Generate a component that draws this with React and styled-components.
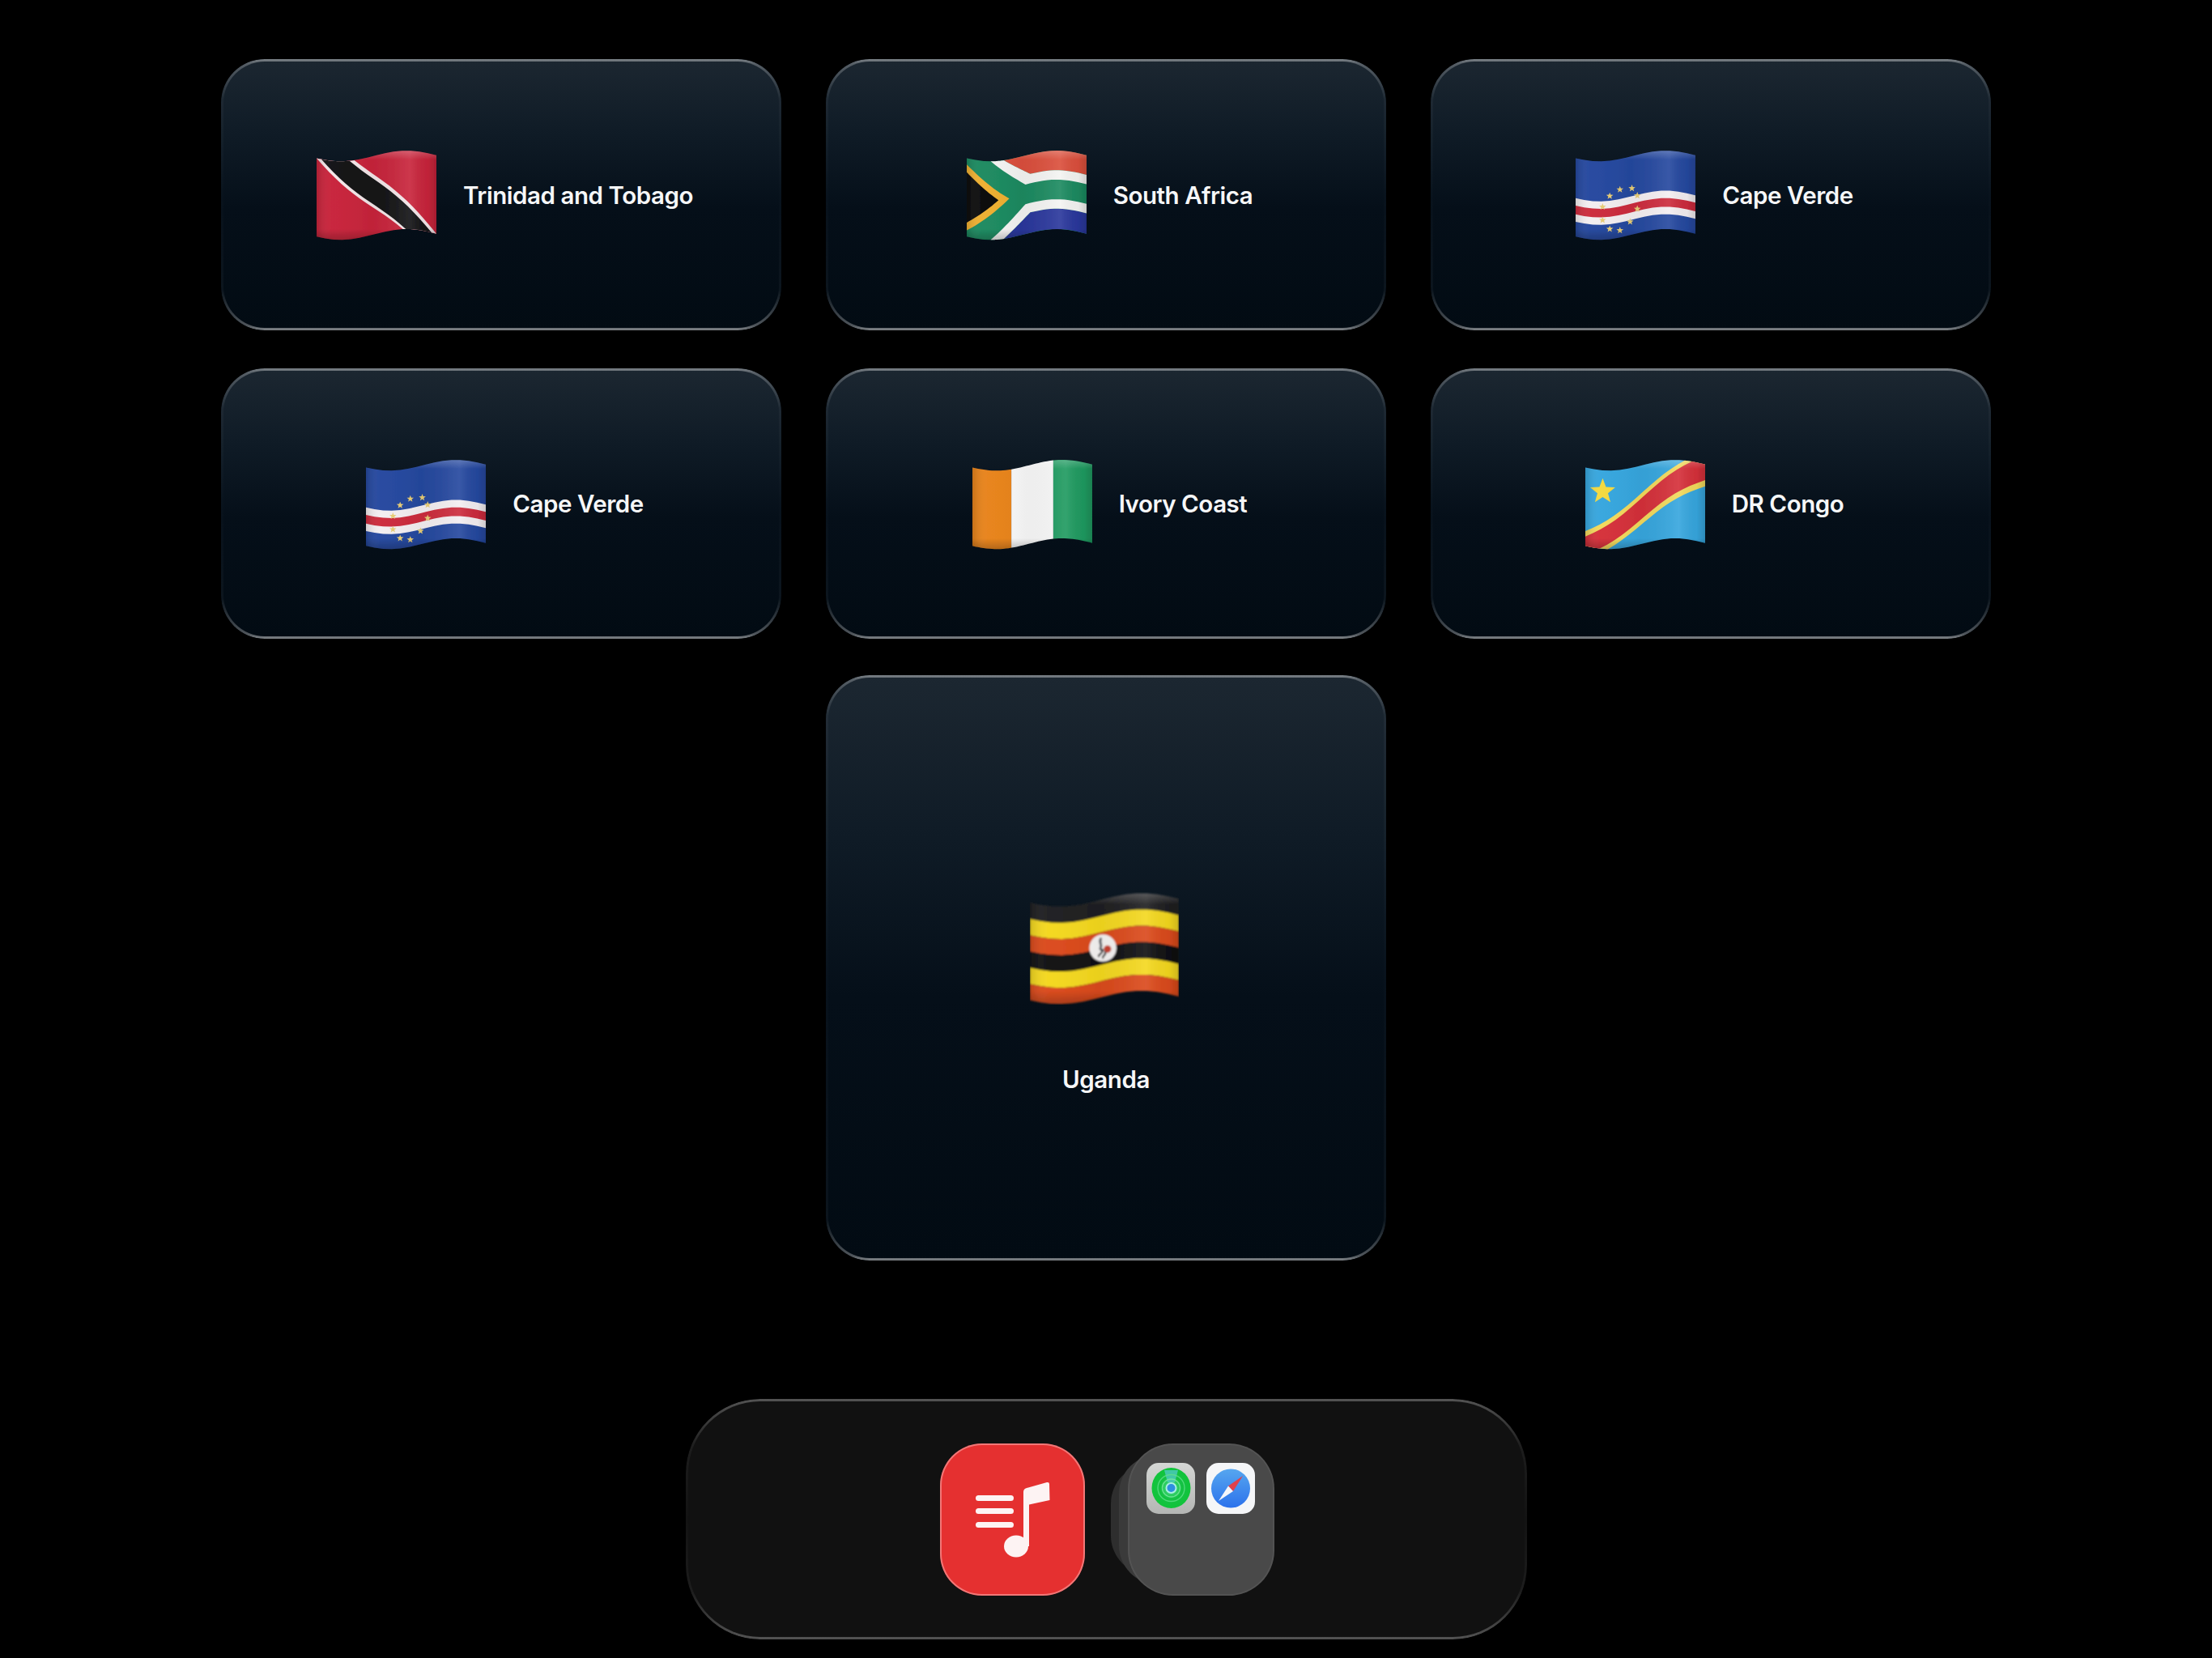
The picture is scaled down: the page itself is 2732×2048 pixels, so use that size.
import React, { useId } from "react";
import styled, { createGlobalStyle } from "styled-components";

const Global = createGlobalStyle`
  html, body { margin: 0; padding: 0; background: #000; }
  body { font-family: Inter, "Liberation Sans", sans-serif; }
`;

const Page = styled.main`
  width: 2732px;
  height: 2048px;
  box-sizing: border-box;
  padding-top: 73px;
  display: flex;
  flex-direction: column;
  align-items: center;
  background: #000;
  overflow: hidden;
`;

const Grid = styled.section`
  display: grid;
  grid-template-columns: repeat(3, 692px);
  grid-template-rows: 335px 334px 721px;
  column-gap: 55px;
  row-gap: 47px;
`;

const Card = styled.article`
  position: relative;
  box-sizing: border-box;
  display: flex;
  flex-direction: ${(p) => (p.$tall ? "column" : "row")};
  grid-column: ${(p) => (p.$tall ? "2" : "auto")};
  margin-top: ${(p) => (p.$tall ? "-2px" : "0")};
  align-items: center;
  justify-content: center;
  gap: ${(p) => (p.$tall ? "74px" : "33px")};
  padding: ${(p) => (p.$tall ? "62px 0 0" : "0 0 0 9px")};
  border-radius: 54px;
  background: linear-gradient(180deg, #1c2731 0%, #0f1b26 28%, #050f19 55%, #020b13 100%);

  &::after {
    content: "";
    position: absolute;
    inset: 0;
    padding: 3px;
    border-radius: inherit;
    background: linear-gradient(
      180deg,
      rgba(255, 255, 255, 0.42) 0,
      rgba(255, 255, 255, 0.26) 6px,
      rgba(255, 255, 255, 0.04) 50px,
      rgba(255, 255, 255, 0.01) 50%,
      rgba(255, 255, 255, 0.04) calc(100% - 50px),
      rgba(255, 255, 255, 0.3) calc(100% - 6px),
      rgba(255, 255, 255, 0.5) 100%
    );
    mask: linear-gradient(#000 0 0) content-box exclude, linear-gradient(#000 0 0);
    pointer-events: none;
  }
`;

const Name = styled.span`
  font-size: 29.5px;
  font-weight: 600;
  line-height: 36px;
  letter-spacing: -0.45px;
  color: #f6f7f8;
`;

const FlagSvg = styled.svg`
  display: block;
  flex: none;
  width: ${(p) => p.$size}px;
  height: ${(p) => p.$size * (110 / 145)}px;
  margin: ${(p) => (p.$large ? "0 5px 0 0" : "2px 0 0 0")};
`;

const Dock = styled.nav`
  position: relative;
  isolation: isolate;
  box-sizing: border-box;
  width: 1039px;
  height: 297px;
  margin-top: 171px;
  padding-left: 2px;
  border-radius: 92px;
  background: #111;
  display: flex;
  align-items: center;
  justify-content: center;
  gap: 53px;

  &::after {
    content: "";
    position: absolute;
    inset: 0;
    padding: 3px;
    border-radius: inherit;
    background: linear-gradient(
      180deg,
      rgba(255, 255, 255, 0.28) 0,
      rgba(255, 255, 255, 0.05) 60px,
      rgba(255, 255, 255, 0.01) 50%,
      rgba(255, 255, 255, 0.05) calc(100% - 60px),
      rgba(255, 255, 255, 0.28) 100%
    );
    mask: linear-gradient(#000 0 0) content-box exclude, linear-gradient(#000 0 0);
    pointer-events: none;
  }
`;

const AppTile = styled.div`
  width: 179px;
  height: 188px;
  box-sizing: border-box;
  border-radius: 52px;
  background: #e53030;
  box-shadow: inset 0 0 0 2px rgba(255, 190, 190, 0.5);
  svg { display: block; width: 100%; height: 100%; }
`;

const Folder = styled.div`
  position: relative;
  width: 181px;
  height: 188px;
  box-sizing: border-box;
  padding: 24px 23px;
  border-radius: 56px;
  background: #494949;
  box-shadow: inset 0 0 0 2px rgba(255, 255, 255, 0.06);
  display: grid;
  grid-template-columns: 60px 60px;
  grid-auto-rows: 63px;
  column-gap: 14px;
`;

const FolderLayer = styled.div`
  position: absolute;
  z-index: ${(p) => p.$z};
  left: ${(p) => p.$left}px;
  top: ${(p) => p.$inset}px;
  bottom: ${(p) => p.$inset}px;
  width: 120px;
  border-radius: 48px;
  background: ${(p) => p.$color};
`;

const MiniIcon = styled.div`
  border-radius: 15px;
  overflow: hidden;
  svg { display: block; width: 100%; height: 100%; }
`;

const W = 145;
const H = 95;
const wave = (u) => 6.5 + 6.5 * Math.cos((2 * Math.PI * (u - 0.2)) / 1.1);
const warp = (u, v) => [u * W, H * v + wave(u) + 1];

function path(points) {
  let d = "";
  points.forEach((pt, i) => {
    const next = points[(i + 1) % points.length];
    for (let s = 0; s < 14; s++) {
      const t = s / 14;
      const [x, y] = warp(pt[0] + (next[0] - pt[0]) * t, pt[1] + (next[1] - pt[1]) * t);
      d += `${d ? "L" : "M"}${x.toFixed(2)} ${y.toFixed(2)}`;
    }
  });
  return d + "Z";
}

const band = (a, b) => [[0, a], [1, a], [1, b], [0, b]];
const column = (a, b) => [[a, 0], [b, 0], [b, 1], [a, 1]];

function starAt(u, v, r) {
  const [cx, cy] = warp(u, v);
  let d = "";
  for (let i = 0; i < 10; i++) {
    const a = -Math.PI / 2 + (i * Math.PI) / 5;
    const rad = i % 2 ? r * 0.42 : r;
    d += `${i ? "L" : "M"}${(cx + rad * Math.cos(a)).toFixed(2)} ${(cy + rad * Math.sin(a)).toFixed(2)}`;
  }
  return d + "Z";
}

const S = (points, fill) => ({ d: path(points), fill });

const cvStars = [
  [0.37, 0.39], [0.47, 0.41], [0.515, 0.52], [0.515, 0.69], [0.455, 0.83],
  [0.37, 0.91], [0.285, 0.87], [0.225, 0.75], [0.225, 0.58], [0.285, 0.45],
];

const FLAGS = {
  tt: [
    S(band(0, 1), "#c8243b"),
    S([[0, 0], [0.315, 0], [1, 1], [0.72, 1]], "#f3e6e8"),
    S([[0.04, 0], [0.275, 0], [0.96, 1], [0.745, 1]], "#131315"),
  ],
  za: [
    S(band(0, 1), "#1c8a60"),
    S([[0.31, 0], [1, 0], [1, 0.25], [0.53, 0.25]], "#db4f3c"),
    S([[0.2, 0], [0.31, 0], [0.53, 0.25], [1, 0.25], [1, 0.37], [0.49, 0.37]], "#f4f4f2"),
    S([[0.31, 1], [1, 1], [1, 0.74], [0.53, 0.74]], "#2a379c"),
    S([[0.2, 1], [0.31, 1], [0.53, 0.74], [1, 0.74], [1, 0.62], [0.49, 0.62]], "#f4f4f2"),
    S([[0, 0.08], [0.355, 0.5], [0, 0.92]], "#eeaf30"),
    S([[0, 0.18], [0.265, 0.5], [0, 0.82]], "#0b0b0c"),
  ],
  cv: [
    S(band(0, 1), "#25489f"),
    S(band(0.51, 0.81), "#f3eef1"),
    S(band(0.605, 0.715), "#cc2b3d"),
    ...cvStars.map(([u, v]) => ({ d: starAt(u, v, 4.4), fill: "#e8cd75" })),
  ],
  ci: [
    S(column(0, 0.325), "#e8831b"),
    S(column(0.325, 0.675), "#f8f8f8"),
    S(column(0.675, 1), "#1f9a60"),
  ],
  cd: [
    S(band(0, 1), "#36a6de"),
    S([[0, 0.81], [0.83, 0], [1, 0], [1, 0.28], [0.19, 1], [0, 1]], "#f2d95c"),
    S([[0, 0.88], [0.89, 0], [1, 0], [1, 0.2], [0.12, 1], [0, 1]], "#d5303a"),
    { d: starAt(0.145, 0.27, 16), fill: "#f3d93f" },
  ],
  ug: [
    S(band(0, 1 / 6), "#1f1f21"),
    S(band(1 / 6, 2 / 6), "#f4d81f"),
    S(band(2 / 6, 3 / 6), "#db4a1c"),
    S(band(3 / 6, 4 / 6), "#111113"),
    S(band(4 / 6, 5 / 6), "#f4d81f"),
    S(band(5 / 6, 1), "#db4a1c"),
  ],
};

function Crane() {
  const [cx, cy] = warp(0.49, 0.5);
  return (
    <g transform={`translate(${cx} ${cy})`}>
      <circle r="13.2" fill="#f5f3f2" />
      <path d="M-2 -9 C-4 -6 -1 -4 -2 -1 C-3 1 -2 2 0 2" fill="none" stroke="#5a5f66" strokeWidth="2.4" strokeLinecap="round" />
      <circle cx="4.5" cy="1" r="3.6" fill="#c8402f" />
      <path d="M-1 2 C1 5 -5 6 -4 8 M2 4 C4 7 -1 7 0 9.5" fill="none" stroke="#1d1d1f" strokeWidth="1.7" strokeLinecap="round" />
    </g>
  );
}

function Flag({ code, size = 148, large = false }) {
  const id = useId().replace(/[^a-zA-Z0-9]/g, "");
  const outline = path(band(0, 1));
  return (
    <FlagSvg $size={size} $large={large} viewBox="0 0 145 110" role="img" aria-label={code}>
      <defs>
        <linearGradient id={`${id}s`} x1="0" x2="1" y1="0" y2="0">
          <stop offset="0" stopColor="#000" stopOpacity="0.14" />
          <stop offset="0.12" stopColor="#fff" stopOpacity="0.02" />
          <stop offset="0.45" stopColor="#000" stopOpacity="0.04" />
          <stop offset="0.78" stopColor="#fff" stopOpacity="0.09" />
          <stop offset="0.93" stopColor="#000" stopOpacity="0.04" />
          <stop offset="1" stopColor="#000" stopOpacity="0.16" />
        </linearGradient>
        <linearGradient id={`${id}v`} x1="0" x2="0" y1="0" y2="1">
          <stop offset="0" stopColor="#fff" stopOpacity="0.2" />
          <stop offset="0.1" stopColor="#fff" stopOpacity="0" />
          <stop offset="0.88" stopColor="#000" stopOpacity="0" />
          <stop offset="1" stopColor="#000" stopOpacity="0.22" />
        </linearGradient>
        <filter id={`${id}b`} x="-5%" y="-5%" width="110%" height="110%">
          <feGaussianBlur stdDeviation="0.7" />
        </filter>
      </defs>
      <g filter={`url(#${id}b)`}>
        {FLAGS[code].map((shape, i) => (
          <path key={i} d={shape.d} fill={shape.fill} />
        ))}
        {code === "ug" && <Crane />}
        <path d={outline} fill={`url(#${id}s)`} />
        <path d={outline} fill={`url(#${id}v)`} />
      </g>
    </FlagSvg>
  );
}

function MusicGlyph() {
  return (
    <svg viewBox="0 0 179 188">
      <g fill="#fdf3f3">
        <rect x="44" y="64" width="47" height="7" rx="3.5" />
        <rect x="44" y="80" width="47" height="7" rx="3.5" />
        <rect x="44" y="97" width="47" height="7" rx="3.5" />
        <path d="M103 60 Q103 56 107 55 L132 48 Q135 47.5 135 50 L135.5 70 L110 75.5 L110 127 L103 127 Z" />
        <ellipse cx="94" cy="127" rx="15" ry="13.5" />
      </g>
    </svg>
  );
}

function FindMyGlyph() {
  return (
    <svg viewBox="0 0 60 63">
      <defs>
        <linearGradient id="fmbg" x1="0" x2="0" y1="0" y2="1">
          <stop offset="0" stopColor="#d4d6d4" />
          <stop offset="1" stopColor="#b4b6b4" />
        </linearGradient>
        <radialGradient id="fmdisc">
          <stop offset="0.3" stopColor="#34d06a" />
          <stop offset="0.55" stopColor="#14c243" />
          <stop offset="1" stopColor="#10c43a" />
        </radialGradient>
      </defs>
      <rect width="60" height="63" fill="url(#fmbg)" />
      <ellipse cx="30.5" cy="31" rx="24" ry="25" fill="url(#fmdisc)" />
      <path d="M22 9 L39 9 L35 24 L26 24 Z" fill="#4ec9c0" opacity="0.8" />
      <circle cx="30.5" cy="31" r="16.5" fill="none" stroke="#5fe08a" strokeWidth="1.4" opacity="0.8" />
      <circle cx="30.5" cy="31" r="11" fill="none" stroke="#7ae8a0" strokeWidth="1.4" opacity="0.8" />
      <circle cx="30.5" cy="31" r="6" fill="#2f8fe0" stroke="#a8f0e0" strokeWidth="2" />
    </svg>
  );
}

function SafariGlyph() {
  return (
    <svg viewBox="0 0 60 63">
      <defs>
        <linearGradient id="sfdisc" x1="0" x2="0" y1="0" y2="1">
          <stop offset="0" stopColor="#56a6ef" />
          <stop offset="1" stopColor="#2c72ec" />
        </linearGradient>
      </defs>
      <rect width="60" height="63" fill="#f5f6f8" />
      <circle cx="30" cy="31.5" r="24" fill="url(#sfdisc)" />
      <path d="M45 16 L27 28.5 L33 35 Z" fill="#e0414c" />
      <path d="M15 47 L33 35 L27 28.5 Z" fill="#f4f6fa" />
    </svg>
  );
}

const countries = [
  { code: "tt", name: "Trinidad and Tobago" },
  { code: "za", name: "South Africa" },
  { code: "cv", name: "Cape Verde" },
  { code: "cv", name: "Cape Verde" },
  { code: "ci", name: "Ivory Coast" },
  { code: "cd", name: "DR Congo" },
];

export default function App() {
  return (
    <Page>
      <Global />
      <Grid>
        {countries.map((c, i) => (
          <Card key={i}>
            <Flag code={c.code} />
            <Name>{c.name}</Name>
          </Card>
        ))}
        <Card $tall>
          <Flag code="ug" size={184} large />
          <Name>Uganda</Name>
        </Card>
      </Grid>
      <Dock>
        <AppTile>
          <MusicGlyph />
        </AppTile>
        <Folder>
          <FolderLayer $z={-2} $left={-21} $inset={26} $color="#2e2e2e" />
          <FolderLayer $z={-1} $left={-11} $inset={14} $color="#3a3a3a" />
          <MiniIcon>
            <FindMyGlyph />
          </MiniIcon>
          <MiniIcon>
            <SafariGlyph />
          </MiniIcon>
        </Folder>
      </Dock>
    </Page>
  );
}
